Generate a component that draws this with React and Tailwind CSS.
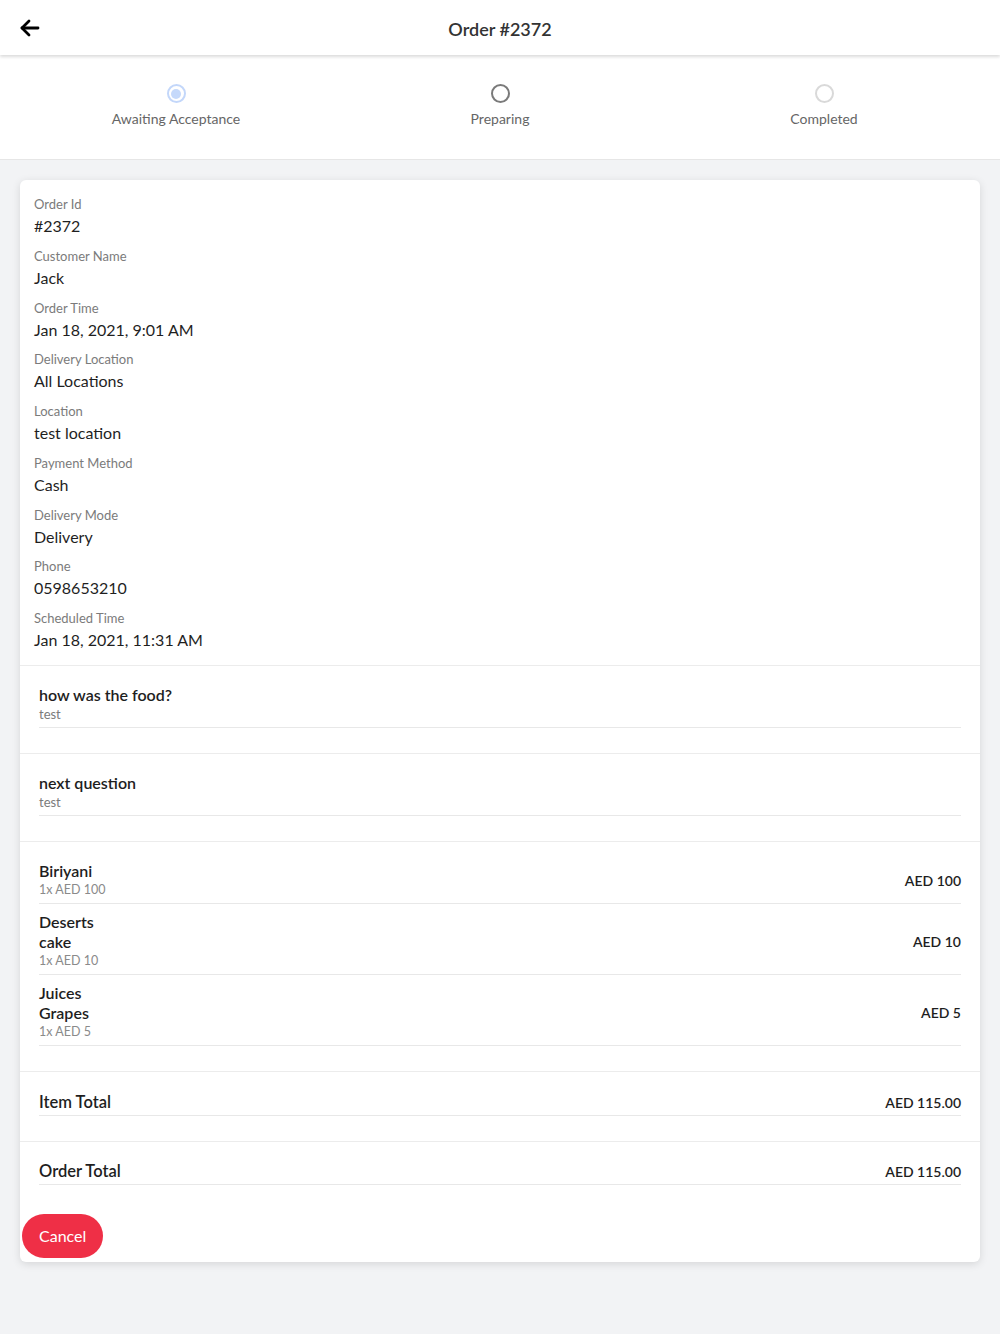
import React from "react";

const font = { fontFamily: "Lato, 'Open Sans', sans-serif" };

function Field({ label, value }) {
  return (
    <div className="mb-[9.75px]">
      <div className="text-[13px] leading-[18px] text-[#7b7b7b]">{label}</div>
      <div className="mt-[2px] text-[16px] leading-[22px] text-[#1f1f1f]">{value}</div>
    </div>
  );
}

function Step({ label, state }) {
  let circle = "border-[#d9d9d9]";
  let inner = null;
  if (state === "active") {
    circle = "border-[#c3d7fa] bg-white";
    inner = <div className="h-[10px] w-[10px] rounded-full bg-[#c5d9fb]" />;
  } else if (state === "next") {
    circle = "border-[#7a7a7a]";
  }
  return (
    <div className="flex flex-1 flex-col items-center">
      <div className={`flex h-[19px] w-[19px] items-center justify-center rounded-full border-2 ${circle}`}>{inner}</div>
      <div className="mt-[7px] text-[14px] leading-[18px] text-[#666]">{label}</div>
    </div>
  );
}

function Question({ q, a }) {
  return (
    <div className="border-b border-[#ececec] px-[19px] pt-[19px] pb-[25px]">
      <div className="border-b border-[#e8e8e8] pb-[4px]">
        <div className="text-[16px] leading-[20px] font-semibold text-[#1e1e1e]">{q}</div>
        <div className="text-[13px] leading-[18px] text-[#7b7b7b]">{a}</div>
      </div>
    </div>
  );
}

function Item({ lines, qty, price, first }) {
  return (
    <div className={`flex items-center justify-between border-b border-[#e8e8e8] pb-[5px] ${first ? "" : "pt-[8px]"}`}>
      <div>
        {lines.map((l) => (
          <div key={l} className="text-[16px] leading-[20px] font-semibold text-[#1e1e1e]">{l}</div>
        ))}
        <div className="text-[12.5px] leading-[17px] text-[#8a8a8a]">{qty}</div>
      </div>
      <div className="mt-[2px] text-[14px] font-semibold text-[#1e1e1e]">{price}</div>
    </div>
  );
}

function Total({ label, value, pt }) {
  return (
    <div className={`px-[19px] ${pt}`}>
      <div className="flex items-center justify-between border-b border-[#e8e8e8] pb-[2px]">
        <div className="text-[16.5px] leading-[22px] font-semibold text-[#1e1e1e]">{label}</div>
        <div className="mt-[1px] text-[14px] font-semibold text-[#1e1e1e]">{value}</div>
      </div>
    </div>
  );
}

export default function App() {
  return (
    <div style={font} className="min-h-[1334px] w-full bg-[#f2f3f5]">
      <header className="relative z-10 flex h-[55px] items-center justify-center bg-white shadow-[0_2px_3px_rgba(0,0,0,0.14)]">
        <button className="absolute left-[18px] top-[16px] text-black">
          <svg width="24" height="24" viewBox="0 0 24 24" fill="none" stroke="currentColor" strokeWidth="2.8" strokeLinecap="round" strokeLinejoin="round">
            <path d="M20 12H4" />
            <path d="M11 5l-7 7 7 7" />
          </svg>
        </button>
        <h1 className="mt-[3px] text-[18px] font-semibold text-[#333]">Order #2372</h1>
      </header>

      <div className="flex h-[105px] items-start border-b border-[#e6e6e6] bg-white px-[14px] pt-[29px]">
        <Step label="Awaiting Acceptance" state="active" />
        <Step label="Preparing" state="next" />
        <Step label="Completed" state="idle" />
      </div>

      <div className="px-[20px] pt-[20px]">
        <div className="overflow-hidden rounded-[6px] bg-white shadow-[0_2px_8px_rgba(0,0,0,0.12)]">
          <div className="border-b border-[#ececec] px-[14px] pt-[15px] pb-[4px]">
            <Field label="Order Id" value="#2372" />
            <Field label="Customer Name" value="Jack" />
            <Field label="Order Time" value="Jan 18, 2021, 9:01 AM" />
            <Field label="Delivery Location" value="All Locations" />
            <Field label="Location" value="test location" />
            <Field label="Payment Method" value="Cash" />
            <Field label="Delivery Mode" value="Delivery" />
            <Field label="Phone" value="0598653210" />
            <Field label="Scheduled Time" value="Jan 18, 2021, 11:31 AM" />
          </div>

          <Question q="how was the food?" a="test" />
          <Question q="next question" a="test" />

          <div className="border-b border-[#ececec] px-[19px] pt-[19px] pb-[25px]">
            <Item first lines={["Biriyani"]} qty="1x AED 100" price="AED 100" />
            <Item lines={["Deserts", "cake"]} qty="1x AED 10" price="AED 10" />
            <Item lines={["Juices", "Grapes"]} qty="1x AED 5" price="AED 5" />
          </div>

          <div className="border-b border-[#ececec] pb-[25px]">
            <Total label="Item Total" value="AED 115.00" pt="pt-[19px]" />
          </div>
          <Total label="Order Total" value="AED 115.00" pt="pt-[18px]" />

          <div className="px-[2px] pt-[29px] pb-[4px]">
            <button className="h-[44px] rounded-full bg-[#ef2f46] px-[17px] text-[16px] text-white">Cancel</button>
          </div>
        </div>
      </div>
    </div>
  );
}
